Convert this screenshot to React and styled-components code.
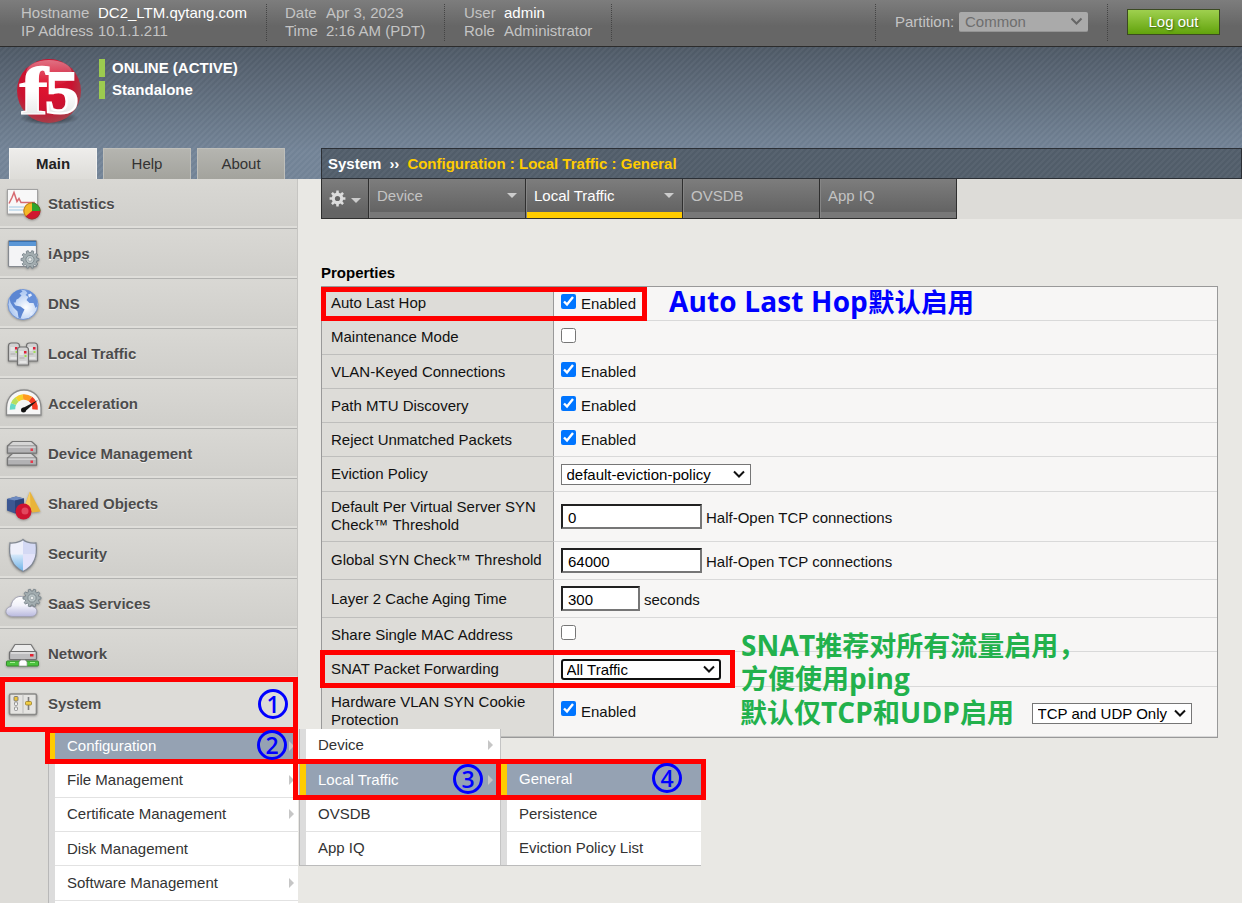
import React from 'react';
import styled, { createGlobalStyle, css } from 'styled-components';

const Global = createGlobalStyle`
  * { box-sizing: border-box; }
  html, body, #root { margin: 0; padding: 0; }
  body { width: 1242px; height: 903px; overflow: hidden; background: #e9e8e4; font: 15px/18px "Liberation Sans", Arial, sans-serif; color: #111; }
`;

const Page = styled.div`
  position: relative;
  width: 1242px;
  height: 903px;
  overflow: hidden;
  display: flex;
  flex-direction: column;
`;

/* ---------- top bar ---------- */
const TopBar = styled.header`
  height: 47px;
  flex: none;
  display: flex;
  padding-top: 4px;
  background: linear-gradient(#7d7d7d, #666 26px, #666);
  border-bottom: 1px solid #2c2c2c;
  color: #c4c4c4;
`;
const InfoGroup = styled.dl`
  margin: 0;
  width: ${p => p.$width}px;
  height: 37px;
  padding-left: ${p => p.$pad}px;
  display: grid;
  grid-template-columns: ${p => p.$label}px 1fr;
  grid-auto-rows: 18px;
  white-space: nowrap;
  background: repeating-linear-gradient(#444 0 1px, transparent 1px 2px) right top / 1px 100% no-repeat;
  dt, dd { margin: 0; }
`;
const Bright = styled.dd`color: #fff;`;
const Partition = styled.div`
  margin-left: auto;
  width: 233px;
  height: 37px;
  display: flex;
  padding: 8px 0 0 20px;
  background:
    repeating-linear-gradient(#444 0 1px, transparent 1px 2px) left top / 1px 100% no-repeat,
    repeating-linear-gradient(#444 0 1px, transparent 1px 2px) right top / 1px 100% no-repeat;
  span { width: 64px; line-height: 20px; }
`;
const PartitionBox = styled.div`
  width: 129px;
  height: 20px;
  padding: 0 5px 0 6px;
  display: flex;
  align-items: center;
  justify-content: space-between;
  border-radius: 2px;
  background: #aaa;
  border-bottom: 1px solid #949494;
  color: #6e6e6e;
`;
const LogOut = styled.button`
  width: 93px;
  height: 26px;
  margin: 5px 22px 0 19px;
  padding: 0 0 1px;
  border: 1px solid #3b4a22;
  background: linear-gradient(#9fd04f, #62a30c);
  color: #fff;
  font: 15px/18px "Liberation Sans", Arial, sans-serif;
  text-shadow: 1px 1px 2px #35600a;
`;

/* ---------- banner ---------- */
const stripes = 'repeating-linear-gradient(135deg, rgba(255,255,255,.035) 0 2px, rgba(0,0,0,.015) 2px 4.24px)';
const Banner = styled.section`
  height: 132px;
  flex: none;
  display: flex;
  background: ${stripes}, linear-gradient(#4f5a67, #748598 105px);
`;
const BannerLeft = styled.div`
  width: 321px;
  display: flex;
  flex-direction: column;
  justify-content: space-between;
`;
const Brand = styled.div`
  display: flex;
  padding: 7px 0 0 12px;
`;
const StatusList = styled.div`
  padding: 5px 0 0 7px;
  display: flex;
  flex-direction: column;
  gap: 4px;
`;
const Status = styled.div`
  height: 18px;
  padding-left: 7px;
  border-left: 6px solid #9ccb4f;
  color: #fff;
  font-weight: bold;
`;
const TabRow = styled.nav`
  display: flex;
  gap: 6px;
  padding-left: 9px;
`;
const SideTab = styled.div`
  width: 88px;
  height: 31px;
  line-height: 30px;
  text-align: center;
  color: #333;
  background: linear-gradient(#b5b5b0, #a3a39d);
  border: 1px solid #bfbfba;
  border-bottom: 0;
  ${p => p.$active && css`
    color: #222;
    font-weight: bold;
    background: linear-gradient(#eeedeb, #dddcd8);
    border-color: #f2f2f0;
  `}
`;
const Crumb = styled.div`
  flex: 1;
  align-self: flex-end;
  height: 31px;
  padding-left: 6px;
  display: flex;
  line-height: 29px;
  font-weight: bold;
  color: #fff;
  border: 1px solid #2c3036;
  background: ${stripes}, #525e6b;
  i { font-style: normal; width: 26px; text-align: center; }
  b { color: #fc0; }
`;

/* ---------- body ---------- */
const Body = styled.div`
  flex: 1;
  min-height: 0;
  display: flex;
`;
const Side = styled.aside`
  width: 298px;
  flex: none;
  background: #dddcd8;
  border-right: 1px solid #c6c5c2;
`;
const NavItem = styled.div`
  height: 50px;
  display: flex;
  align-items: center;
  padding-left: 4px;
  gap: 5px;
  font-weight: bold;
  color: #4c4c4c;
  text-shadow: 0 1px 0 #eee;
  background: linear-gradient(#d9d8d4, #d0cfcb 47px, #dfdeda 47px);
  border-bottom: 1px solid #b2b2b0;
  svg { flex: none; display: block; }
  ${p => p.$open && css`
    background: #dddcd8;
    border-bottom-color: #dddcd8;
  `}
`;
const Menu = styled.ul`
  list-style: none;
  margin: 0;
  padding: 0 0 0 ${p => p.$strip}px;
  background: linear-gradient(90deg, #dcdcdc, #dcdcdc) left / ${p => p.$strip}px 100% no-repeat, #fff;
  border-left: ${p => (p.$line ? '1px solid #b8b8b8' : '0')};
`;
const SideMenu = styled(Menu)`
  width: 250px;
  margin-left: 48px;
`;
const FlyOut = styled(Menu)`
  position: absolute;
  left: ${p => p.$x}px;
  top: ${p => p.$y}px;
  width: ${p => p.$w}px;
  border-bottom: 1px solid #bbb;
  border-right: ${p => (p.$line ? '1px solid #c4c4c4' : '0')};
`;
const MenuItem = styled.li`
  height: ${p => p.$h || 34}px;
  display: flex;
  align-items: center;
  justify-content: space-between;
  padding: 0 ${p => p.$end || 4}px ${p => p.$lift || 0}px 12px;
  color: #333;
  border-bottom: ${p => (p.$last ? '0' : '1px solid #e2e2e2')};
  ${p => p.$on && css`
    margin-left: -6px;
    border-left: 6px solid #fc0;
    background: #95a2b3;
    color: #fff;
  `}
`;
const Caret = styled.span`
  border: 5px solid transparent;
  border-left-color: #c6c6c6;
  border-right-width: 0;
`;

/* ---------- main area ---------- */
const Main = styled.main`
  flex: 1;
  padding-left: 23px;
  background: #e9e8e4;
`;
const ToolTabs = styled.nav`
  display: flex;
  height: 40px;
  background: #dddcd8;
`;
const ToolTab = styled.div`
  width: ${p => p.$w}px;
  height: 40px;
  padding: 8px 8px 0 8px;
  display: flex;
  justify-content: space-between;
  color: ${p => (p.$on ? '#fff' : '#c3c3c3')};
  border-right: 1px solid #2f2f2f;
  border-bottom: 1px solid #2f2f2f;
  background: linear-gradient(#7d7d7d, #646464 32px);
  ${p => !p.$gear && css`box-shadow: inset 1px 0 #858585, inset 0 -6px ${p.$on ? '#fc0' : '#787878'};`}
  ${p => p.$gear && css`border-left: 1px solid #2f2f2f; padding: 11px 7px 0 7px;`}
`;
const Down = styled.span`
  margin-top: ${p => p.$top}px;
  height: 5px;
  border: 5px solid transparent;
  border-top-color: #ccc;
  border-bottom-width: 0;
`;
const Heading = styled.h2`
  margin: 45px 0 4px;
  font-size: 15px;
  line-height: 18px;
  color: #000;
`;
const Table = styled.div`
  width: 897px;
  border: 1px solid #999;
  background: #f7f6f5;
`;
const Row = styled.div`
  display: flex;
  height: ${p => p.$h}px;
  border-bottom: 1px solid #d9d9d9;
`;
const Label = styled.div`
  width: 232px;
  padding: 0 0 ${p => (p.$lift ? 2 : 0)}px 9px;
  display: flex;
  align-items: center;
  color: #111;
  background: #dddcd8;
  border-right: 1px solid #999;
  box-shadow: 0 1px #bebebc;
  white-space: pre;
`;
const Field = styled.div`
  flex: 1;
  padding: 0 25px 0 7px;
  display: flex;
  align-items: center;
`;
const Unit = styled.span`padding: 2px 0 0 4px;`;
const CheckText = styled.span`padding-left: 5px;`;
const Check = styled.input.attrs({ type: 'checkbox' })`
  width: 15px;
  height: 15px;
  margin: 0 0 ${p => p.$up || 4}px;
`;
const TextBox = styled.input`
  width: ${p => p.$w}px;
  height: 25px;
  padding: 2px 5px 0;
  border: 2px solid;
  border-color: #212121 #767676 #767676 #212121;
  background: #fff;
  font: 15px "Liberation Sans", Arial, sans-serif;
  margin: 0;
`;
const SelectWrap = styled.div`
  display: grid;
  align-items: center;
  width: ${p => p.$w}px;
  margin: ${p => (p.$right ? '4px 0 0 auto' : 0)};
  > * { grid-area: 1 / 1; }
  svg { justify-self: end; margin-right: 5px; pointer-events: none; }
`;
const NativeSelect = styled.select`
  appearance: none;
  width: 100%;
  height: 21px;
  margin: 0;
  border: ${p => (p.$focus ? '2px solid #101010' : '1px solid #767676')};
  border-radius: ${p => (p.$focus ? 3 : 0)}px;
  padding: 0 0 0 ${p => (p.$focus ? 3.5 : 4.5)}px;
  background: #fff;
  color: #000;
  font: 15px/17px "Liberation Sans", Arial, sans-serif;
`;
const Select = ({ w, right, focus, value }) => (
  <SelectWrap $w={w} $right={right}>
    <NativeSelect $focus={focus}><option>{value}</option></NativeSelect>
    <svg width="14" height="9" viewBox="0 0 14 9"><path d="M2 1.500l5 5 5-5" fill="none" stroke="#111" strokeWidth="2" /></svg>
  </SelectWrap>
);

/* ---------- annotations ---------- */
const Mark = styled.div`
  position: absolute;
  left: ${p => p.$x}px;
  top: ${p => p.$y}px;
  width: ${p => p.$w}px;
  height: ${p => p.$h}px;
  border: 5px solid #f00;
`;
const Step = styled.div`
  position: absolute;
  left: ${p => p.$x - 15}px;
  top: ${p => p.$y - 15}px;
  width: 30px;
  height: 30px;
  border: 3px solid #00f;
  border-radius: 50%;
  color: #00f;
  font: 600 23px/24px "Open Sans", "Noto Sans", sans-serif;
  text-align: center;
`;
const Note = styled.div`
  position: absolute;
  left: ${p => p.$x}px;
  top: ${p => p.$y}px;
  color: ${p => p.$color};
  font: 700 ${p => p.$size}px/30px "Noto Sans CJK SC", sans-serif;
  white-space: nowrap;
`;
const Latin = styled.span`
  font-family: "Open Sans", "Noto Sans", sans-serif;
  font-size: 28px;
  line-height: 1;
  letter-spacing: .15px;
`;

/* ---------- icons ---------- */
const Svg = ({ children, dy = 0 }) => (
  <svg width="41" height="40" viewBox={`4 ${-dy} 41 40`} style={{ filter: 'drop-shadow(0 1px 1px rgba(0,0,0,.3))', marginRight: -2 }}>{children}</svg>
);
const gearPath = (cx, cy, ro, ri, n) => {
  let d = '';
  for (let i = 0; i < n; i++) {
    const s = (Math.PI * 2) / n;
    const a = i * s;
    [[ri, -0.3], [ro, -0.19], [ro, 0.19], [ri, 0.3]].forEach(([r, k], j) => {
      d += `${i || j ? 'L' : 'M'}${(cx + r * Math.cos(a + k * s)).toFixed(2)} ${(cy + r * Math.sin(a + k * s)).toFixed(2)}`;
    });
  }
  return d + 'Z';
};
const Cog = ({ x, y, r = 9 }) => (
  <g>
    <path d={gearPath(x, y, r, r * 0.78, 10)} fill="#a3adb0" stroke="#78838a" strokeWidth=".9" />
    <circle cx={x} cy={y} r={r * 0.46} fill="#bcc6c8" stroke="#7f8a8f" strokeWidth="1" />
    <circle cx={x} cy={y} r={r * 0.2} fill="#e6e9e9" stroke="#8a9498" strokeWidth=".6" />
  </g>
);
const IconStatistics = () => (
  <Svg dy={0.5}>
    <rect x="7.5" y="5" width="30" height="24.5" fill="#f8f8f8" stroke="#a2a2a2" />
    <path d="M9 22.5h27M9 25.5h27" stroke="#bcd7ea" strokeWidth="1.3" />
    <path d="M9 19l3-6 2-5 3 9 2-3 2 4h14" fill="none" stroke="#d66a70" strokeWidth="1.5" />
    <circle cx="32" cy="26.5" r="8.5" fill="#d0182f" />
    <path d="M32 26.5V18a8.500 8.500 0 0 0-6.500 14z" fill="#f4b826" />
    <path d="M32 26.500V18a8.500 8.500 0 0 1 8.500 8.500z" fill="#2fa52c" />
    <circle cx="32" cy="26.500" r="8" fill="none" stroke="#6b4a1d" strokeOpacity=".4" />
  </Svg>
);
const IconIApps = () => (
  <Svg dy={1}>
    <rect x="8.500" y="5.500" width="28" height="26" rx="1" fill="#f4f4f6" stroke="#85898f" strokeWidth="1.2" />
    <rect x="9" y="6" width="27" height="5" fill="#5a96d6" />
    <path d="M9 6.500h27" stroke="#376fae" />
    <Cog x={30} y={24.500} />
  </Svg>
);
const IconDns = () => (
  <Svg dy={1.5}>
    <defs><radialGradient id="globe" cx=".6" cy=".6"><stop offset="0" stopColor="#fff" /><stop offset="1" stopColor="#b3ccf3" /></radialGradient></defs>
    <circle cx="23" cy="19" r="15" fill="url(#globe)" stroke="#7396d6" />
    <path d="M9.500 13c2-5 6-8 11-9l2 2-3 2 2 2-3 3-2 1-1 3-2 0 2 3 5 1 4 3-2 4-2 5-2-1-1-6-4-4-3-5z" fill="#5c86d2" />
    <path d="M25 4.500l5 1 5 4 2 5 .5 6-2 2-2-5-4 0-3-3 2-3-3-2 2-2z" fill="#6790d9" />
    <path d="M28 9l3-1 1 2-3 2zM30 27l3-1-1 3-2 1z" fill="#e3edff" />
  </Svg>
);
const Tower = ({ x, y }) => (
  <g>
    <path d={`M${x} ${y + 4}q0-3 3-3h5q3 0 3 3v15h-11z`} fill="#d2d2d2" stroke="#707070" strokeWidth="1.200" />
    <path d={`M${x + 2} ${y + 6}h4M${x + 2} ${y + 8}h4M${x + 2} ${y + 16}h7`} stroke="#f9f9f9" />
    <path d={`M${x + 2} ${y + 12}h5`} stroke="#aaa" />
    <rect x={x + 6.500} y={y + 5} width="2.500" height="2.500" fill="#e0223a" />
    <rect x={x + 7} y={y + 9} width="2" height="2" fill="#9ddf52" />
  </g>
);
const IconTraffic = () => (<Svg dy={1}><Tower x={8.500} y={7} /><Tower x={26.500} y={7} /><Tower x={17.500} y={11} /></Svg>);
const IconGauge = () => (
  <Svg dy={0.5}>
    <path d="M6.500 30.500v-7C6.500 13 14 5.500 24 5.500S41 13 41 23.500v7z" fill="#f7f7f7" stroke="#8b8b8b" strokeWidth="1.300" />
    <g fill="none" strokeWidth="5.500">
      <path d="M12.500 25a12 12 0 0 1 1-5.500" stroke="#67dac5" /><path d="M13.500 19.500a11 11 0 0 1 3.500-4.500" stroke="#b7e05e" />
      <path d="M17 15a11 11 0 0 1 6-2.500" stroke="#f6d128" /><path d="M23 12.500a11 11 0 0 1 7.500 2" stroke="#ff9a1e" />
      <path d="M30.500 14.500a12 12 0 0 1 4.500 10.500" stroke="#f33b22" />
    </g>
    <path d="M22 24L38 15.500 25 27z" fill="#171717" /><circle cx="23.500" cy="25.500" r="2.500" fill="#111" />
  </Svg>
);
const Drive = ({ y }) => (
  <g>
    <path d={`M7.500 ${y + 6}l5-4.500h19l5 4.500v7h-29z`} fill="#d6d6d6" stroke="#777" strokeWidth="1.200" strokeLinejoin="round" />
    <path d={`M7.500 ${y + 6}h29v7h-29z`} fill="#b2b2b4" stroke="#777" strokeWidth="1.200" />
    <path d={`M8.500 ${y + 7}h27`} stroke="#ececec" />
    <rect x="30.500" y={y + 8.500} width="2.500" height="2.500" fill="#e8394a" />
  </g>
);
const IconDevices = () => (<Svg dy={0.5}><Drive y={17.500} /><Drive y={5.500} /></Svg>);
const IconShapes = () => (
  <Svg>
    <path d="M30 7.500l10.500 20-8 1-9-3z" fill="#e9b43a" /><path d="M30 7.500l-6.500 18 7 2.500z" fill="#f6cd63" />
    <path d="M7 15l9-2.500 8 2v12l-9 3-8-3z" fill="#3c5792" /><path d="M7 15l9-2.500 8 2-9 2z" fill="#6d8ac0" /><path d="M15 16.500l9-2v12l-9 3z" fill="#2c437a" />
    <circle cx="23.500" cy="27.500" r="8" fill="#cf1431" /><circle cx="25" cy="27" r="3.500" fill="#ef6b7d" opacity=".6" />
  </Svg>
);
const IconShield = () => (
  <Svg dy={1.5}>
    <defs>
      <clipPath id="shield"><path d="M23 4q4 4 13 3.500C38 22 34 31 23 36 12 31 8 22 10 7.500 19 8 23 4 23 4z" /></clipPath>
      <linearGradient id="blueShine" x2="0" y2="1"><stop stopColor="#d7e9fa" /><stop offset="1" stopColor="#66aee6" /></linearGradient>
    </defs>
    <g clipPath="url(#shield)">
      <rect x="8" y="2" width="32" height="36" fill="#eef0fb" />
      <path d="M23 2h15v17H23z" fill="#d4d9f4" /><path d="M8 19h15v18H8z" fill="url(#blueShine)" /><path d="M23 19h16v18H23z" fill="#e3e3fa" />
    </g>
    <path d="M23 4q4 4 13 3.500C38 22 34 31 23 36 12 31 8 22 10 7.500 19 8 23 4 23 4z" fill="none" stroke="#828993" strokeWidth="1.300" />
  </Svg>
);
const IconCloud = () => (
  <Svg dy={1}>
    <defs><linearGradient id="cloud" y2="1" x2="0"><stop stopColor="#fff" /><stop offset=".45" stopColor="#f2f2fa" /><stop offset="1" stopColor="#b9b9de" /></linearGradient></defs>
    <path d="M13 31.500c-9 0-9-9-2-10 1-10 11-13 16-7 3 2 3 5 3 7 9-1 9 10 1 10z" fill="url(#cloud)" stroke="#a2a2b4" />
    <Cog x={32} y={13} r={9} />
  </Svg>
);
const IconNetwork = () => (
  <Svg dy={4.5}>
    <path d="M10 14l5-8h16l5 8z" fill="#ececec" stroke="#777" strokeWidth="1.200" strokeLinejoin="round" />
    <rect x="9.500" y="13" width="27" height="8" rx="1" fill="#bdbdbf" stroke="#707070" strokeWidth="1.200" />
    <path d="M11 14.500h24" stroke="#f6f6f6" />
    <rect x="30" y="15.500" width="3.500" height="2.500" fill="#e32332" />
    <rect x="6.500" y="22.500" width="32" height="5" rx="1" fill="#4bc33d" stroke="#378b2f" />
    <path d="M10 24h5M30 24h5" stroke="#a6ee95" />
    <path d="M19 27.500v-4l2-2h4l2 2v4z" fill="#fff" stroke="#999" strokeWidth=".7" />
  </Svg>
);
const IconSystem = () => (
  <Svg dy={0.5}>
    <rect x="9.500" y="9.500" width="27" height="20.500" rx="1.500" fill="#e5e4e1" stroke="#8a8a88" strokeWidth="1.700" />
    <path d="M23 10v19" stroke="#bdbdbb" />
    <rect x="14" y="12" width="4" height="4.500" rx="1" fill="#ebc23b" stroke="#777" strokeWidth=".9" />
    <rect x="14.500" y="17.500" width="3" height="3.500" rx="1" fill="#eee" stroke="#8a8a8a" strokeWidth=".9" />
    <rect x="14.500" y="22.500" width="3" height="3.500" rx="1" fill="#eee" stroke="#8a8a8a" strokeWidth=".9" />
    <path d="M28.500 12.500v13" stroke="#7e7e7e" strokeWidth="1.600" />
    <rect x="25.500" y="17" width="6" height="3.500" rx="1" fill="#f0cd43" stroke="#9a7f2b" strokeWidth=".8" />
  </Svg>
);
const Logo = () => (
  <svg width="80" height="74" viewBox="12 54 80 74">
    <defs>
      <radialGradient id="ball" cx=".45" cy=".4" r=".62"><stop offset="0" stopColor="#e3142f" /><stop offset=".65" stopColor="#cb1230" /><stop offset="1" stopColor="#a2434c" /></radialGradient>
      <linearGradient id="gloss" x2="0" y2="1"><stop stopColor="#fff" stopOpacity=".4" /><stop offset="1" stopColor="#fff" stopOpacity="0" /></linearGradient>
      <radialGradient id="shade"><stop stopColor="#000" stopOpacity=".75" /><stop offset="1" stopColor="#000" stopOpacity="0" /></radialGradient>
      <linearGradient id="face" x2="0" y2="1"><stop offset=".5" stopColor="#fff" /><stop offset="1" stopColor="#dcdcdc" /></linearGradient>
    </defs>
    <ellipse cx="49" cy="118" rx="30" ry="7" fill="url(#shade)" />
    <circle cx="49" cy="91" r="32" fill="url(#ball)" />
    <ellipse cx="49" cy="73" rx="23" ry="13" fill="url(#gloss)" />
    <g fill="url(#face)" stroke="#fff" fontFamily="Liberation Serif, Times New Roman, serif" fontWeight="bold">
      <text transform="translate(19.500 114) scale(1.260 1)" fontSize="68" strokeWidth="1.200">f</text>
      <text transform="translate(45 112.500) scale(1.110 1)" fontSize="61" strokeWidth="2.200">5</text>
    </g>
  </svg>
);

const NAV = [
  ['Statistics', IconStatistics], ['iApps', IconIApps], ['DNS', IconDns], ['Local Traffic', IconTraffic],
  ['Acceleration', IconGauge], ['Device Management', IconDevices], ['Shared Objects', IconShapes],
  ['Security', IconShield], ['SaaS Services', IconCloud], ['Network', IconNetwork], ['System', IconSystem],
];

const CheckField = ({ on, up }) => (
  <Field><Check defaultChecked={on} $up={up} />{on && <CheckText>Enabled</CheckText>}</Field>
);

export default function App() {
  return (
    <Page>
      <Global />
      <TopBar>
        <InfoGroup $width={267} $pad={21} $label={77}>
          <dt>Hostname</dt><Bright>DC2_LTM.qytang.com</Bright>
          <dt>IP Address</dt><dd>10.1.1.211</dd>
        </InfoGroup>
        <InfoGroup $width={178} $pad={18} $label={41}>
          <dt>Date</dt><dd>Apr 3, 2023</dd>
          <dt>Time</dt><dd>2:16 AM (PDT)</dd>
        </InfoGroup>
        <InfoGroup $width={167} $pad={19} $label={40}>
          <dt>User</dt><Bright>admin</Bright>
          <dt>Role</dt><dd>Administrator</dd>
        </InfoGroup>
        <Partition>
          <span>Partition:</span>
          <PartitionBox>
            Common
            <svg width="13" height="9" viewBox="0 0 13 9"><path d="M1.500 1.500l5 5 5-5" fill="none" stroke="#666" strokeWidth="2" /></svg>
          </PartitionBox>
        </Partition>
        <LogOut>Log out</LogOut>
      </TopBar>

      <Banner>
        <BannerLeft>
          <Brand>
            <Logo />
            <StatusList>
              <Status>ONLINE (ACTIVE)</Status>
              <Status>Standalone</Status>
            </StatusList>
          </Brand>
          <TabRow>
            <SideTab $active>Main</SideTab>
            <SideTab>Help</SideTab>
            <SideTab>About</SideTab>
          </TabRow>
        </BannerLeft>
        <Crumb>System<i>››</i><b>Configuration : Local Traffic : General</b></Crumb>
      </Banner>

      <Body>
        <Side>
          {NAV.map(([name, Icon]) => (
            <NavItem key={name} $open={name === 'System'}><Icon />{name}</NavItem>
          ))}
          <SideMenu $strip={6} $line>
            <MenuItem $on $h={35}>Configuration<Caret /></MenuItem>
            <MenuItem $lift={1}>File Management<Caret /></MenuItem>
            <MenuItem $lift={1}>Certificate Management<Caret /></MenuItem>
            <MenuItem>Disk Management</MenuItem>
            <MenuItem $h={35}>Software Management<Caret /></MenuItem>
            <MenuItem />
          </SideMenu>
        </Side>

        <Main>
          <ToolTabs>
            <ToolTab $w={48} $gear>
              <svg width="17" height="17" viewBox="0 0 17 17">
                <path d={gearPath(8.5, 8.5, 8, 5.8, 8)} fill="#ddd" />
                <circle cx="8.500" cy="8.500" r="2.600" fill="#666" />
              </svg>
              <Down $top={8} />
            </ToolTab>
            <ToolTab $w={157}>Device<Down $top={6} /></ToolTab>
            <ToolTab $w={157} $on>Local Traffic<Down $top={6} /></ToolTab>
            <ToolTab $w={137}>OVSDB</ToolTab>
            <ToolTab $w={137}>App IQ</ToolTab>
          </ToolTabs>

          <Heading>Properties</Heading>
          <Table>
            <Row $h={34}><Label $lift>Auto Last Hop</Label><CheckField on /></Row>
            <Row $h={34}><Label $lift>Maintenance Mode</Label><CheckField /></Row>
            <Row $h={34}><Label>VLAN-Keyed Connections</Label><CheckField on /></Row>
            <Row $h={34}><Label>Path MTU Discovery</Label><CheckField on /></Row>
            <Row $h={34}><Label>Reject Unmatched Packets</Label><CheckField on /></Row>
            <Row $h={35}>
              <Label>Eviction Policy</Label>
              <Field><Select w={190} value="default-eviction-policy" /></Field>
            </Row>
            <Row $h={50}>
              <Label $lift>{'Default Per Virtual Server SYN\nCheck™ Threshold'}</Label>
              <Field><TextBox $w={141} defaultValue="0" /><Unit>Half-Open TCP connections</Unit></Field>
            </Row>
            <Row $h={38}>
              <Label $lift>Global SYN Check™ Threshold</Label>
              <Field><TextBox $w={141} defaultValue="64000" /><Unit>Half-Open TCP connections</Unit></Field>
            </Row>
            <Row $h={38}>
              <Label>Layer 2 Cache Aging Time</Label>
              <Field><TextBox $w={79} defaultValue="300" /><Unit>seconds</Unit></Field>
            </Row>
            <Row $h={34}><Label>Share Single MAC Address</Label><CheckField /></Row>
            <Row $h={35}>
              <Label>SNAT Packet Forwarding</Label>
              <Field><Select w={160} focus value="All Traffic" /></Field>
            </Row>
            <Row $h={50}>
              <Label $lift>{'Hardware VLAN SYN Cookie\nProtection'}</Label>
              <Field>
                <Check defaultChecked $up={6} /><CheckText>Enabled</CheckText>
                <Select w={160} right value="TCP and UDP Only" />
              </Field>
            </Row>
          </Table>
        </Main>
      </Body>

      <FlyOut $x={299} $y={729} $w={202} $strip={6} $line>
        <MenuItem $end={7} $h={35} $lift={2}>Device<Caret /></MenuItem>
        <MenuItem $on $end={7} $lift={1}>Local Traffic<Caret /></MenuItem>
        <MenuItem $lift={1}>OVSDB</MenuItem>
        <MenuItem $h={33} $last $lift={1}>App IQ</MenuItem>
      </FlyOut>
      <FlyOut $x={501} $y={763} $w={200} $strip={6}>
        <MenuItem $on $h={35} $lift={2}>General</MenuItem>
        <MenuItem $lift={1}>Persistence</MenuItem>
        <MenuItem $h={33} $last $lift={1}>Eviction Policy List</MenuItem>
      </FlyOut>

      <Mark $x={321} $y={287} $w={326} $h={34} />
      <Mark $x={320} $y={650} $w={415} $h={38} />
      <Mark $x={0} $y={677} $w={298} $h={55} />
      <Mark $x={45} $y={728} $w={253} $h={36} />
      <Mark $x={293} $y={759} $w={208} $h={41} />
      <Mark $x={496} $y={759} $w={210} $h={41} />
      <Step $x={273} $y={704}>1</Step>
      <Step $x={272} $y={745}>2</Step>
      <Step $x={468} $y={779}>3</Step>
      <Step $x={667} $y={778}>4</Step>
      <Note $x={669} $y={286} $size={26.5} $color="#00f"><Latin>Auto Last Hop</Latin>默认启用</Note>
      <Note $x={741} $y={630} $size={27} $color="#22b14c"><Latin>SNAT</Latin>推荐对所有流量启用，</Note>
      <Note $x={741} $y={663} $size={27} $color="#22b14c">方便使用<Latin>ping</Latin></Note>
      <Note $x={740} $y={697} $size={27} $color="#22b14c">默认仅<Latin>TCP</Latin>和<Latin>UDP</Latin>启用</Note>
    </Page>
  );
}
